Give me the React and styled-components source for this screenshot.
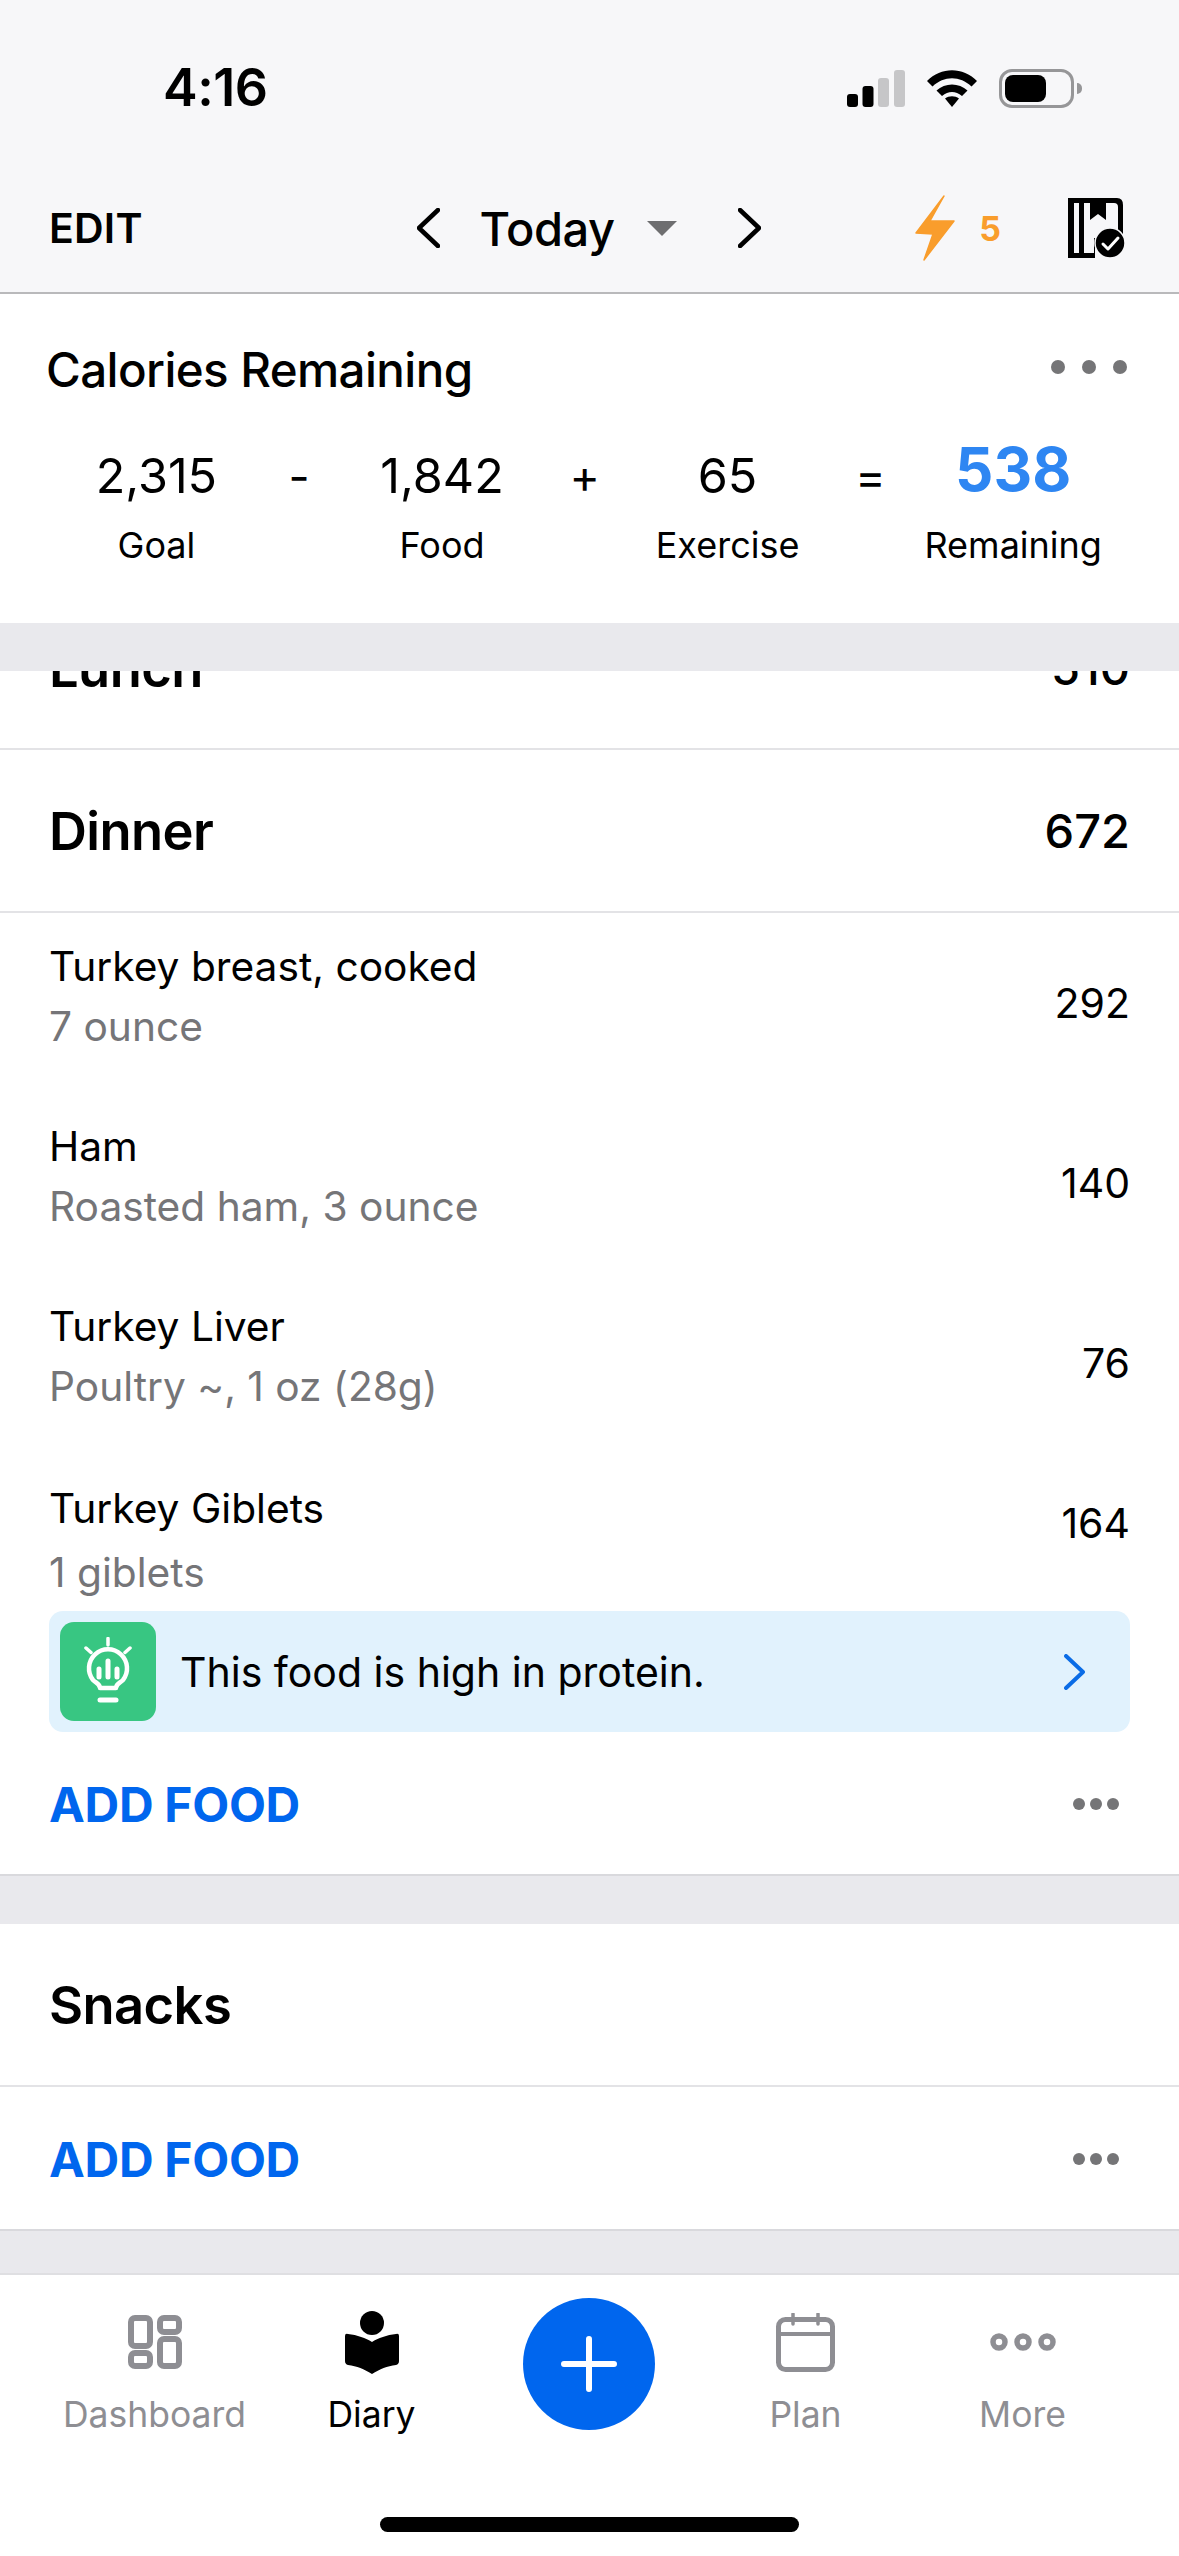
import React from 'react'
import styled, { createGlobalStyle } from 'styled-components'

const GlobalStyle = createGlobalStyle`
  html, body { margin: 0; padding: 0; background: #fff; }
  * { box-sizing: border-box; }
  body { font-family: Inter, "Liberation Sans", sans-serif; color: #000; }
`

const foods = [
  { name: 'Turkey breast, cooked', detail: '7 ounce', cal: 292 },
  { name: 'Ham', detail: 'Roasted ham, 3 ounce', cal: 140 },
  { name: 'Turkey Liver', detail: 'Poultry ~, 1 oz (28g)', cal: 76 },
]

const sums = [
  { value: '2,315', label: 'Goal' },
  { sign: '-' },
  { value: '1,842', label: 'Food' },
  { sign: '+' },
  { value: '65', label: 'Exercise' },
  { sign: '=' },
  { value: '538', label: 'Remaining', accent: true },
]

function Chevron({ dir = 'right', color = '#000', w = 23, h = 40, sw = 4.5 }) {
  const pts = dir === 'right' ? `2,2 ${w - 2},${h / 2} 2,${h - 2}` : `${w - 2},2 2,${h / 2} ${w - 2},${h - 2}`
  return (
    <svg width={w} height={h} viewBox={`0 0 ${w} ${h}`}>
      <polyline points={pts} fill="none" stroke={color} strokeWidth={sw} strokeLinecap="round" strokeLinejoin="round" />
    </svg>
  )
}

function SignalIcon() {
  return (
    <svg width="58" height="37" viewBox="0 0 58 37">
      <rect x="0" y="24" width="11" height="13" rx="3" fill="#000" />
      <rect x="15.5" y="16" width="11" height="21" rx="3" fill="#000" />
      <rect x="31" y="8" width="11" height="29" rx="3" fill="#c6c6c8" />
      <rect x="47" y="0" width="11" height="37" rx="3" fill="#c6c6c8" />
    </svg>
  )
}

function WifiIcon() {
  return (
    <svg width="50" height="37" viewBox="0 0 50 37">
      <path d="M0 11 C14 -3.500 36 -3.500 50 11 L44.500 16.500 C33 5.500 17 5.500 5.500 16.500 Z" fill="#000" />
      <path d="M9.500 20.500 C18 12.500 32 12.500 40.500 20.500 L35 26 C28.500 20.500 21.500 20.500 15 26 Z" fill="#000" />
      <path d="M18 28.500 C22 25.500 28 25.500 32 28.500 L25 37 Z" fill="#000" />
    </svg>
  )
}

function BoltIcon() {
  return (
    <svg width="40" height="66" viewBox="0 0 40 66">
      <polygon points="29,1 15,26 39,26 9,65 18,39 1,38" fill="#f99d2c" stroke="#f99d2c" strokeWidth="1.500" strokeLinejoin="round" />
    </svg>
  )
}

function LogBookIcon() {
  return (
    <svg width="57" height="60" viewBox="0 0 57 60">
      <path
        fillRule="evenodd"
        d="M0 0 H49 Q55 0 55 7 V40 H27 V60 H0 Z M6 5 V55 H11 V5 Z M16 5 V55 H26 V40 H50 V9 Q50 5 46 5 H38 V22 L30 16 L22 22 V5 Z"
        fill="#000"
      />
      <path d="M16 55 H27 V60 H16 Z" fill="#000" />
      <circle cx="42" cy="45" r="15" fill="#000" stroke="#f7f7f9" strokeWidth="1.500" />
      <polyline points="35,46 40,51 50,40" fill="none" stroke="#fff" strokeWidth="3" strokeLinecap="round" strokeLinejoin="round" />
    </svg>
  )
}

function BulbIcon() {
  return (
    <svg width="48" height="66" viewBox="0 0 48 66" fill="none" stroke="#fff" strokeLinecap="round">
      <path d="M24 1.500 V8 M2 11 L7 15.500 M46 11 L41 15.500" strokeWidth="3.500" />
      <path
        d="M16 51 C16 47 12 46 9 43 A19 19 0 1 1 39 43 C36 46 32 47 32 51 Z"
        strokeWidth="4.500"
        strokeLinejoin="round"
      />
      <path d="M16 63 H32" strokeWidth="5" />
      <path d="M15 32 V40 M24 24 V40 M33 32 V40" strokeWidth="5" />
    </svg>
  )
}

function DashboardIcon() {
  return (
    <svg width="54" height="54" viewBox="0 0 54 54" fill="none" stroke="#8e8e93" strokeWidth="6">
      <rect x="3" y="3" width="19" height="28" rx="4" />
      <rect x="32" y="3" width="19" height="14" rx="4" />
      <rect x="3" y="38" width="19" height="13" rx="4" />
      <rect x="32" y="24" width="19" height="27" rx="4" />
    </svg>
  )
}

function DiaryIcon() {
  return (
    <svg width="54" height="63" viewBox="0 0 54 63">
      <circle cx="27" cy="12" r="12" fill="#000" />
      <path
        d="M0 25 Q0 22 3 23 C12 24 21 27 27 31 C33 27 42 24 51 23 Q54 22 54 25 V50 Q54 53 51 54 C42 55 35 58 27 63 C19 58 12 55 3 54 Q0 53 0 50 Z"
        fill="#000"
      />
    </svg>
  )
}

function PlanIcon() {
  return (
    <svg width="59" height="59" viewBox="0 0 59 59" fill="none" stroke="#8e8e93">
      <rect x="2.500" y="6.500" width="54" height="50" rx="7" strokeWidth="5" />
      <path d="M3 21 H56" strokeWidth="4" />
      <path d="M17 1 V11 M42 1 V11" strokeWidth="3.500" strokeLinecap="round" />
    </svg>
  )
}

function MoreIcon() {
  return (
    <svg width="66" height="18" viewBox="0 0 66 18" fill="none" stroke="#8e8e93" strokeWidth="5.500">
      <circle cx="9" cy="9" r="6" />
      <circle cx="33" cy="9" r="6" />
      <circle cx="57" cy="9" r="6" />
    </svg>
  )
}

function PlusIcon() {
  return (
    <svg width="56" height="56" viewBox="0 0 56 56" stroke="#fff" strokeWidth="6" strokeLinecap="round">
      <path d="M28 3 V53 M3 28 H53" />
    </svg>
  )
}

function AddFoodRow() {
  return (
    <AddRow>
      <AddLink>ADD FOOD</AddLink>
      <Dots $size={12} $gap={5}>
        <i /><i /><i />
      </Dots>
    </AddRow>
  )
}

export default function App() {
  return (
    <Page>
      <GlobalStyle />
      <Header>
        <StatusBar>
          <Clock>4:16</Clock>
          <StatusIcons>
            <SignalIcon />
            <WifiIcon />
            <Battery>
              <BatteryFill />
            </Battery>
          </StatusIcons>
        </StatusBar>
        <NavBar>
          <EditLabel>EDIT</EditLabel>
          <DatePicker>
            <Chevron dir="left" />
            <DateLabel>Today</DateLabel>
            <Caret />
            <Chevron />
          </DatePicker>
          <NavActions>
            <Streak>
              <BoltIcon />
              <StreakCount>5</StreakCount>
            </Streak>
            <LogBookIcon />
          </NavActions>
        </NavBar>
      </Header>

      <Summary>
        <SummaryTop>
          <SummaryTitle>Calories Remaining</SummaryTitle>
          <SummaryDots $size={14} $gap={17}>
            <i /><i /><i />
          </SummaryDots>
        </SummaryTop>
        <SumGrid>
          {sums.map((s, i) =>
            s.sign ? (
              <SumSign key={i}>{s.sign}</SumSign>
            ) : (
              <SumCell key={i}>
                <SumValue $accent={s.accent}>{s.value}</SumValue>
                <SumLabel>{s.label}</SumLabel>
              </SumCell>
            )
          )}
        </SumGrid>
      </Summary>
      <Band />

      <Diary>
        <ClippedRow>
          <MealName>Lunch</MealName>
          <MealCal>510</MealCal>
        </ClippedRow>

        <MealHeader>
          <MealName>Dinner</MealName>
          <MealCal>672</MealCal>
        </MealHeader>

        {foods.map((f) => (
          <FoodRow key={f.name}>
            <FoodText>
              <FoodName>{f.name}</FoodName>
              <FoodDetail>{f.detail}</FoodDetail>
            </FoodText>
            <FoodCal>{f.cal}</FoodCal>
          </FoodRow>
        ))}

        <FoodRow $withTip>
          <FoodText $withTip>
            <FoodName>Turkey Giblets</FoodName>
            <FoodDetail>1 giblets</FoodDetail>
          </FoodText>
          <FoodCal $withTip>164</FoodCal>
        </FoodRow>

        <Tip>
          <TipBadge>
            <BulbIcon />
          </TipBadge>
          <TipText>This food is high in protein.</TipText>
          <Chevron color="#0a6ce6" w={21} h={36} sw={4} />
        </Tip>

        <AddFoodRow />
        <GapBand />

        <MealHeader>
          <MealName>Snacks</MealName>
        </MealHeader>
        <AddFoodRow />
        <Filler />
      </Diary>

      <TabBar>
        <TabGrid>
          <Tab>
            <TabIcon><DashboardIcon /></TabIcon>
            <TabLabel>Dashboard</TabLabel>
          </Tab>
          <Tab>
            <TabIcon><DiaryIcon /></TabIcon>
            <TabLabel $active>Diary</TabLabel>
          </Tab>
          <Fab><PlusIcon /></Fab>
          <Tab>
            <TabIcon><PlanIcon /></TabIcon>
            <TabLabel>Plan</TabLabel>
          </Tab>
          <Tab>
            <TabIcon><MoreIcon /></TabIcon>
            <TabLabel>More</TabLabel>
          </Tab>
        </TabGrid>
        <HomeIndicator />
      </TabBar>
    </Page>
  )
}

const Page = styled.div`
  width: 1179px;
  height: 2556px;
  display: flex;
  flex-direction: column;
  overflow: hidden;
  background: #fff;
`

const Header = styled.header`
  height: 294px;
  background: #f7f7f9;
  border-bottom: 2px solid #b9b9bb;
  flex-shrink: 0;
`

const StatusBar = styled.div`
  height: 176px;
  padding: 62px 105px 0 163px;
  display: flex;
  justify-content: space-between;
  align-items: flex-start;
`

const Clock = styled.span`
  font-size: 52px;
  line-height: 52px;
  font-weight: 600;
  letter-spacing: -0.5px;
`

const StatusIcons = styled.div`
  display: flex;
  align-items: center;
  gap: 22px;
  padding-top: 7px;
`

const Battery = styled.div`
  position: relative;
  width: 75px;
  height: 39px;
  border: 3px solid #969698;
  border-radius: 13px;
  padding: 3px;
  &::after {
    content: '';
    position: absolute;
    right: -11px;
    top: 11px;
    width: 5px;
    height: 11px;
    border-radius: 0 5px 5px 0;
    background: #969698;
  }
`

const BatteryFill = styled.div`
  width: 41px;
  height: 100%;
  background: #000;
  border-radius: 8px;
`

const NavBar = styled.nav`
  height: 116px;
  display: grid;
  grid-template-columns: 1fr auto 1fr;
  align-items: center;
  padding: 0 54px 12px 49px;
`

const EditLabel = styled.span`
  font-size: 41px;
  font-weight: 600;
  letter-spacing: 0.2px;
`

const DatePicker = styled.div`
  display: flex;
  align-items: center;
  margin-left: 4px;
`

const DateLabel = styled.span`
  font-size: 47px;
  font-weight: 500;
  margin: 0 33px 0 40px;
  letter-spacing: -0.5px;
`

const Caret = styled.span`
  width: 0;
  height: 0;
  border-left: 15px solid transparent;
  border-right: 15px solid transparent;
  border-top: 15px solid #6e6e70;
  margin-right: 61px;
`

const NavActions = styled.div`
  display: flex;
  justify-content: flex-end;
  align-items: center;
  gap: 67px;
`

const Streak = styled.div`
  display: flex;
  align-items: center;
  gap: 24px;
`

const StreakCount = styled.span`
  font-size: 34px;
  font-weight: 700;
  color: #f99d2c;
`

const Summary = styled.section`
  height: 329px;
  flex-shrink: 0;
  background: #fff;
  padding-top: 44px;
`

const SummaryTop = styled.div`
  display: flex;
  justify-content: space-between;
  align-items: center;
  padding: 0 52px 0 46px;
`

const SummaryTitle = styled.h2`
  margin: 0;
  font-size: 47.5px;
  line-height: 64px;
  font-weight: 500;
  letter-spacing: -0.6px;
`

const Dots = styled.span`
  display: flex;
  gap: ${(p) => p.$gap}px;
  i {
    display: block;
    width: ${(p) => p.$size}px;
    height: ${(p) => p.$size}px;
    border-radius: 50%;
    background: #757577;
  }
`

const SummaryDots = styled(Dots)`
  margin-bottom: 6px;
`

const SumGrid = styled.div`
  display: grid;
  grid-template-columns: repeat(7, 142.8px);
  padding-left: 85px;
  margin-top: 42px;
`

const SumCell = styled.div`
  display: flex;
  flex-direction: column;
  align-items: center;
`

const SumSign = styled.div`
  text-align: center;
  font-size: 46px;
  line-height: 64px;
`

const SumValue = styled.span`
  height: 64px;
  font-size: ${(p) => (p.$accent ? '60px' : '48.5px')};
  line-height: ${(p) => (p.$accent ? '50px' : '64px')};
  font-weight: ${(p) => (p.$accent ? 700 : 400)};
  color: ${(p) => (p.$accent ? '#2e86f2' : '#000')};
`

const SumLabel = styled.span`
  margin-top: 16px;
  font-size: 36px;
  line-height: 42px;
`

const Band = styled.div`
  height: 48px;
  flex-shrink: 0;
  background: #e9e9ed;
`

const Diary = styled.main`
  flex: 1;
  min-height: 0;
  overflow: hidden;
  display: flex;
  flex-direction: column;
`

// Lunch has scrolled up under the band, only its lower part still shows
const ClippedRow = styled.div`
  height: 79px;
  flex-shrink: 0;
  overflow: hidden;
  display: flex;
  justify-content: space-between;
  align-items: flex-end;
  padding: 0 49px 48px 49px;
  border-bottom: 2px solid #e3e3e6;
  line-height: 64px;
`

const MealHeader = styled.div`
  height: 163px;
  flex-shrink: 0;
  display: flex;
  justify-content: space-between;
  align-items: center;
  padding: 0 49px;
  border-bottom: 2px solid #e3e3e6;
`

const MealName = styled.span`
  font-size: 52.5px;
  font-weight: 600;
  letter-spacing: -0.6px;
`

const MealCal = styled.span`
  font-size: 47px;
  font-weight: 500;
`

const FoodRow = styled.div`
  height: ${(p) => (p.$withTip ? '158px' : '180px')};
  flex-shrink: 0;
  display: flex;
  justify-content: space-between;
  align-items: ${(p) => (p.$withTip ? 'flex-start' : 'center')};
  padding: ${(p) => (p.$withTip ? '26px 49px 0' : '0 49px')};
`

const FoodText = styled.div`
  display: flex;
  flex-direction: column;
  gap: ${(p) => (p.$withTip ? '4px' : '0')};
  padding-bottom: ${(p) => (p.$withTip ? '0' : '12px')};
`

const FoodName = styled.span`
  font-size: 40.7px;
  line-height: 60px;
`

const FoodDetail = styled.span`
  font-size: 40.7px;
  line-height: 60px;
  color: #757578;
`

const FoodCal = styled.span`
  font-size: 41px;
  line-height: 60px;
  margin-top: ${(p) => (p.$withTip ? '14px' : '0')};
`

const Tip = styled.div`
  height: 121px;
  flex-shrink: 0;
  margin: 0 49px;
  padding: 0 45px 0 11px;
  display: flex;
  align-items: center;
  background: #e1f2fd;
  border-radius: 14px;
`

const TipBadge = styled.div`
  width: 96px;
  height: 99px;
  flex-shrink: 0;
  display: flex;
  align-items: center;
  justify-content: center;
  padding-bottom: 4px;
  border-radius: 14px;
  background: #38c682;
`

const TipText = styled.span`
  flex: 1;
  margin-left: 24px;
  font-size: 41px;
`

const AddRow = styled.div`
  height: 144px;
  flex-shrink: 0;
  display: flex;
  justify-content: space-between;
  align-items: center;
  padding: 2px 60px 0 49px;
  border-bottom: 2px solid #d9d9dd;
`

const AddLink = styled.span`
  font-size: 48px;
  font-weight: 700;
  color: #0066ee;
  letter-spacing: -0.3px;
`

const GapBand = styled.div`
  height: 48px;
  flex-shrink: 0;
  background: #e9e9ed;
`

const Filler = styled.div`
  flex: 1;
  background: #e9e9ed;
`

const TabBar = styled.footer`
  height: 283px;
  flex-shrink: 0;
  display: flex;
  flex-direction: column;
  align-items: center;
  background: #fff;
  border-top: 2px solid #dfdfe2;
`

const TabGrid = styled.div`
  width: 100%;
  display: grid;
  grid-template-columns: repeat(5, 217px);
  padding: 35px 0 0 46px;
`

const Tab = styled.div`
  display: flex;
  flex-direction: column;
  align-items: center;
`

const TabIcon = styled.div`
  height: 64px;
  display: flex;
  align-items: center;
  justify-content: center;
`

const TabLabel = styled.span`
  margin-top: 17px;
  font-size: 35.5px;
  line-height: 48px;
  color: ${(p) => (p.$active ? '#000' : '#8e8e93')};
`

const Fab = styled.div`
  width: 132px;
  height: 132px;
  margin: -12px auto 0;
  border-radius: 50%;
  background: #0066ee;
  display: flex;
  align-items: center;
  justify-content: center;
`

const HomeIndicator = styled.div`
  width: 419px;
  height: 15px;
  margin-top: auto;
  margin-bottom: 24px;
  border-radius: 8px;
  background: #000;
`
